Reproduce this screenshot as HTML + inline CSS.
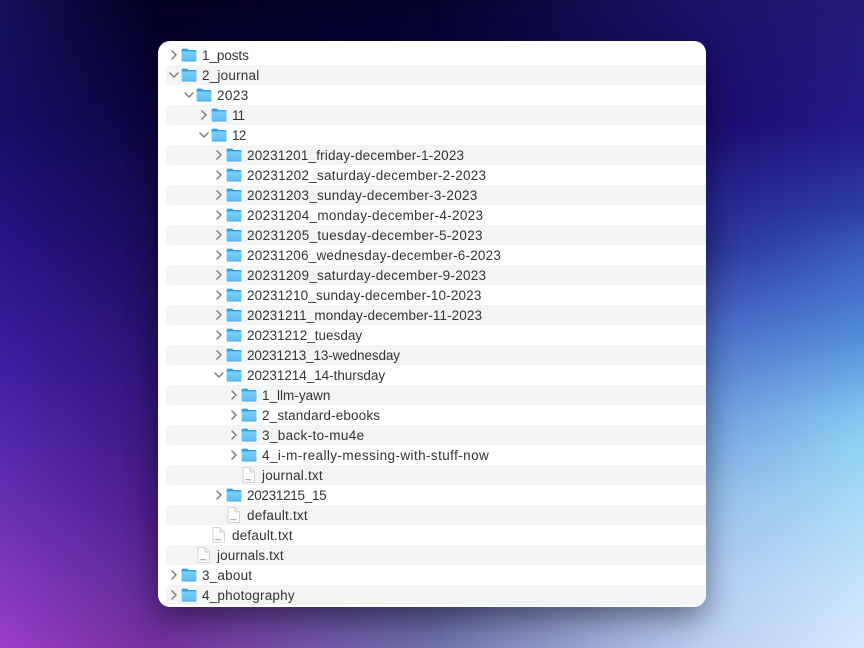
<!DOCTYPE html>
<html>
<head>
<meta charset="utf-8">
<style>
html,body{margin:0;padding:0;width:864px;height:648px;overflow:hidden;background:#0a0636;}
.b{position:absolute;left:0;top:0;width:864px;height:648px;}
#c158{background:linear-gradient(180deg,#03011f 0,#0c0640 124px,#1c0c5c 248px,#2f1478 372px,#4a1c8c 496px,#5c2a98 578px,#75309c 648px);}
#c432{background:linear-gradient(180deg,#05032a 0,#07043a 42px,#201880 300px,#5a5c9c 600px,#6e72aa 648px);
-webkit-mask-image:linear-gradient(90deg,transparent 158px,#000 432px);mask-image:linear-gradient(90deg,transparent 158px,#000 432px);}
#c706{background:linear-gradient(180deg,#1c1468 0,#1c0c70 124px,#262890 207px,#2c3498 248px,#4a6cc8 330px,#6e9cdc 413px,#95bdec 496px,#b0ccf2 578px,#bcd0f2 648px);
-webkit-mask-image:linear-gradient(90deg,transparent 432px,#000 706px);mask-image:linear-gradient(90deg,transparent 432px,#000 706px);}
#c864{background:linear-gradient(180deg,#221a78 0,#241a88 124px,#2c3ca4 207px,#3a5cbc 248px,#4f88d8 330px,#82c4ef 413px,#92d4f3 450px,#a5daf6 496px,#c4e2fa 578px,#d6e8fc 648px);
-webkit-mask-image:linear-gradient(90deg,transparent 706px,#000 864px);mask-image:linear-gradient(90deg,transparent 706px,#000 864px);}
#c0{background:linear-gradient(180deg,#15105a 0,#160f66 124px,#2a1488 248px,#4020a2 372px,#6430b2 496px,#8238bc 578px,#9a3ec8 648px);
-webkit-mask-image:linear-gradient(90deg,#000 0,transparent 158px);mask-image:linear-gradient(90deg,#000 0,transparent 158px);}
#win{position:absolute;left:158px;top:41px;width:548px;height:566px;background:#fff;border-radius:12px;overflow:hidden;}
#sh{position:absolute;left:158px;top:41px;width:548px;height:566px;border-radius:12px;box-shadow:0 10px 30px rgba(0,0,0,.45);}
.r{position:absolute;left:0;width:548px;height:20px;}
.s{background:#f3f5f4;left:8px;width:540px;border-radius:5px 0 0 5px;}
.t{position:absolute;top:1px;font:13.5px/20px "Liberation Sans",sans-serif;color:#333;white-space:nowrap;letter-spacing:.21px;}
svg{position:absolute;}
</style>
</head>
<body>
<div class="b" id="c158"></div>
<div class="b" id="c432"></div>
<div class="b" id="c706"></div>
<div class="b" id="c864"></div>
<div class="b" id="c0"></div>
<div id="sh"></div>
<div id="win">
<svg width="0" height="0" style="position:absolute">
<defs>
<linearGradient id="fg" x1="0" y1="0" x2="0" y2="1"><stop offset="0" stop-color="#78d0fb"/><stop offset="1" stop-color="#5cbcf3"/></linearGradient>
<symbol id="f" viewBox="0 0 16 14"><path d="M.6 4 V2 Q.6 .6 2 .6 H5.6 Q6.4 .6 7 1.4 L7.6 2 H14 Q15.5 2 15.5 3.4 V5 H.6Z" fill="#2f9fe2"/><rect x=".6" y="3.4" width="14.9" height="10" rx="1.2" fill="url(#fg)"/><rect x="1" y="12.8" width="14.1" height=".7" fill="#3f9fdc"/></symbol>
<symbol id="d" viewBox="0 0 13 16"><path d="M1 .5 H8 L12.5 5 V15.5 H1Z" fill="#fdfdfd" stroke="#c8c8c8" stroke-width=".8"/><path d="M8 .5 V5 H12.5" fill="#efefef" stroke="#c8c8c8" stroke-width=".8"/><rect x="3.2" y="12.2" width="6" height="1" fill="#a0a0a0"/></symbol>
<symbol id="c" viewBox="0 0 10 10"><path d="M3 1 L7 5 L3 9" fill="none" stroke="#7e7e7e" stroke-width="1.5" stroke-linecap="round" stroke-linejoin="round"/></symbol>
<symbol id="o" viewBox="0 0 10 10"><path d="M1 3 L5 7 L9 3" fill="none" stroke="#7e7e7e" stroke-width="1.5" stroke-linecap="round" stroke-linejoin="round"/></symbol>
</defs>
</svg>

<div class="r" style="top:4px"><svg style="left:11px;top:5px" width="10" height="10"><use href="#c"/></svg><svg style="left:23px;top:3px" width="16" height="14"><use href="#f"/></svg><div class="t" style="left:44px;letter-spacing:-.07px">1_posts</div></div>
<div class="r s" style="top:24px"></div><div class="r" style="top:24px"><svg style="left:11px;top:5px" width="10" height="10"><use href="#o"/></svg><svg style="left:23px;top:3px" width="16" height="14"><use href="#f"/></svg><div class="t" style="left:44px">2_journal</div></div>
<div class="r" style="top:44px"><svg style="left:26px;top:5px" width="10" height="10"><use href="#o"/></svg><svg style="left:38px;top:3px" width="16" height="14"><use href="#f"/></svg><div class="t" style="left:59px;letter-spacing:.4px">2023</div></div>
<div class="r s" style="top:64px"></div><div class="r" style="top:64px"><svg style="left:41px;top:5px" width="10" height="10"><use href="#c"/></svg><svg style="left:53px;top:3px" width="16" height="14"><use href="#f"/></svg><div class="t" style="left:74px;letter-spacing:-1px">11</div></div>
<div class="r" style="top:84px"><svg style="left:41px;top:5px" width="10" height="10"><use href="#o"/></svg><svg style="left:53px;top:3px" width="16" height="14"><use href="#f"/></svg><div class="t" style="left:74px;letter-spacing:-.6px">12</div></div>
<div class="r s" style="top:104px"></div><div class="r" style="top:104px"><svg style="left:56px;top:5px" width="10" height="10"><use href="#c"/></svg><svg style="left:68px;top:3px" width="16" height="14"><use href="#f"/></svg><div class="t" style="left:89px;letter-spacing:.18px">20231201_friday-december-1-2023</div></div>
<div class="r" style="top:124px"><svg style="left:56px;top:5px" width="10" height="10"><use href="#c"/></svg><svg style="left:68px;top:3px" width="16" height="14"><use href="#f"/></svg><div class="t" style="left:89px;letter-spacing:.27px">20231202_saturday-december-2-2023</div></div>
<div class="r s" style="top:144px"></div><div class="r" style="top:144px"><svg style="left:56px;top:5px" width="10" height="10"><use href="#c"/></svg><svg style="left:68px;top:3px" width="16" height="14"><use href="#f"/></svg><div class="t" style="left:89px;letter-spacing:.27px">20231203_sunday-december-3-2023</div></div>
<div class="r" style="top:164px"><svg style="left:56px;top:5px" width="10" height="10"><use href="#c"/></svg><svg style="left:68px;top:3px" width="16" height="14"><use href="#f"/></svg><div class="t" style="left:89px;letter-spacing:.31px">20231204_monday-december-4-2023</div></div>
<div class="r s" style="top:184px"></div><div class="r" style="top:184px"><svg style="left:56px;top:5px" width="10" height="10"><use href="#c"/></svg><svg style="left:68px;top:3px" width="16" height="14"><use href="#f"/></svg><div class="t" style="left:89px;letter-spacing:.31px">20231205_tuesday-december-5-2023</div></div>
<div class="r" style="top:204px"><svg style="left:56px;top:5px" width="10" height="10"><use href="#c"/></svg><svg style="left:68px;top:3px" width="16" height="14"><use href="#f"/></svg><div class="t" style="left:89px">20231206_wednesday-december-6-2023</div></div>
<div class="r s" style="top:224px"></div><div class="r" style="top:224px"><svg style="left:56px;top:5px" width="10" height="10"><use href="#c"/></svg><svg style="left:68px;top:3px" width="16" height="14"><use href="#f"/></svg><div class="t" style="left:89px;letter-spacing:.27px">20231209_saturday-december-9-2023</div></div>
<div class="r" style="top:244px"><svg style="left:56px;top:5px" width="10" height="10"><use href="#c"/></svg><svg style="left:68px;top:3px" width="16" height="14"><use href="#f"/></svg><div class="t" style="left:89px;letter-spacing:.15px">20231210_sunday-december-10-2023</div></div>
<div class="r s" style="top:264px"></div><div class="r" style="top:264px"><svg style="left:56px;top:5px" width="10" height="10"><use href="#c"/></svg><svg style="left:68px;top:3px" width="16" height="14"><use href="#f"/></svg><div class="t" style="left:89px;letter-spacing:.09px">20231211_monday-december-11-2023</div></div>
<div class="r" style="top:284px"><svg style="left:56px;top:5px" width="10" height="10"><use href="#c"/></svg><svg style="left:68px;top:3px" width="16" height="14"><use href="#f"/></svg><div class="t" style="left:89px;letter-spacing:.02px">20231212_tuesday</div></div>
<div class="r s" style="top:304px"></div><div class="r" style="top:304px"><svg style="left:56px;top:5px" width="10" height="10"><use href="#c"/></svg><svg style="left:68px;top:3px" width="16" height="14"><use href="#f"/></svg><div class="t" style="left:89px;letter-spacing:-.12px">20231213_13-wednesday</div></div>
<div class="r" style="top:324px"><svg style="left:56px;top:5px" width="10" height="10"><use href="#o"/></svg><svg style="left:68px;top:3px" width="16" height="14"><use href="#f"/></svg><div class="t" style="left:89px;letter-spacing:-.04px">20231214_14-thursday</div></div>
<div class="r s" style="top:344px"></div><div class="r" style="top:344px"><svg style="left:71px;top:5px" width="10" height="10"><use href="#c"/></svg><svg style="left:83px;top:3px" width="16" height="14"><use href="#f"/></svg><div class="t" style="left:104px;letter-spacing:.01px">1_llm-yawn</div></div>
<div class="r" style="top:364px"><svg style="left:71px;top:5px" width="10" height="10"><use href="#c"/></svg><svg style="left:83px;top:3px" width="16" height="14"><use href="#f"/></svg><div class="t" style="left:104px;letter-spacing:.15px">2_standard-ebooks</div></div>
<div class="r s" style="top:384px"></div><div class="r" style="top:384px"><svg style="left:71px;top:5px" width="10" height="10"><use href="#c"/></svg><svg style="left:83px;top:3px" width="16" height="14"><use href="#f"/></svg><div class="t" style="left:104px;letter-spacing:.35px">3_back-to-mu4e</div></div>
<div class="r" style="top:404px"><svg style="left:71px;top:5px" width="10" height="10"><use href="#c"/></svg><svg style="left:83px;top:3px" width="16" height="14"><use href="#f"/></svg><div class="t" style="left:104px;letter-spacing:.41px">4_i-m-really-messing-with-stuff-now</div></div>
<div class="r s" style="top:424px"></div><div class="r" style="top:424px"><svg style="left:84px;top:2px" width="13" height="16"><use href="#d"/></svg><div class="t" style="left:104px">journal.txt</div></div>
<div class="r" style="top:444px"><svg style="left:56px;top:5px" width="10" height="10"><use href="#c"/></svg><svg style="left:68px;top:3px" width="16" height="14"><use href="#f"/></svg><div class="t" style="left:89px;letter-spacing:-.29px">20231215_15</div></div>
<div class="r s" style="top:464px"></div><div class="r" style="top:464px"><svg style="left:69px;top:2px" width="13" height="16"><use href="#d"/></svg><div class="t" style="left:89px">default.txt</div></div>
<div class="r" style="top:484px"><svg style="left:54px;top:2px" width="13" height="16"><use href="#d"/></svg><div class="t" style="left:74px">default.txt</div></div>
<div class="r s" style="top:504px"></div><div class="r" style="top:504px"><svg style="left:39px;top:2px" width="13" height="16"><use href="#d"/></svg><div class="t" style="left:59px;letter-spacing:.12px">journals.txt</div></div>
<div class="r" style="top:524px"><svg style="left:11px;top:5px" width="10" height="10"><use href="#c"/></svg><svg style="left:23px;top:3px" width="16" height="14"><use href="#f"/></svg><div class="t" style="left:44px">3_about</div></div>
<div class="r s" style="top:544px"></div><div class="r" style="top:544px"><svg style="left:11px;top:5px" width="10" height="10"><use href="#c"/></svg><svg style="left:23px;top:3px" width="16" height="14"><use href="#f"/></svg><div class="t" style="left:44px">4_photography</div></div>
</div>
</body>
</html>
